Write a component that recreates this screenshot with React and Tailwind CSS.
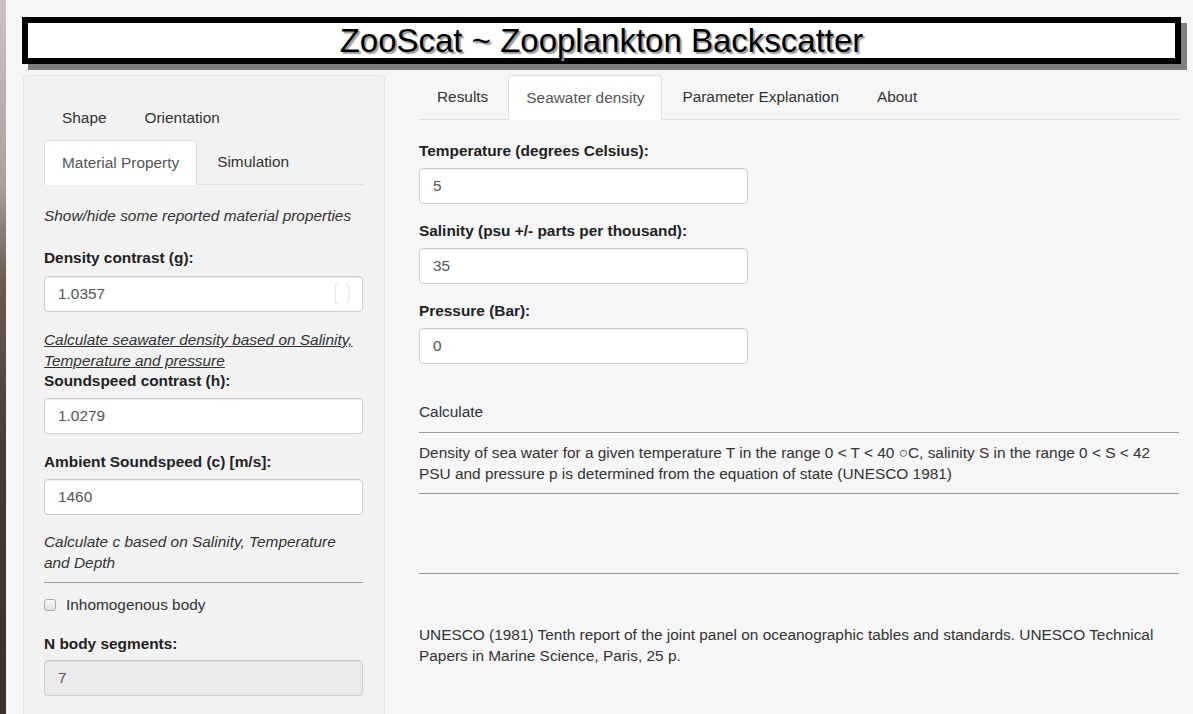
import React from "react";

function Tab({ label, active }) {
  if (active) {
    return (
      <div className="h-[45px] -mb-px mr-[2px] px-[17px] flex items-center bg-white border border-[#ddd] border-b-transparent rounded-t-[4px] text-[#555]">
        {label}
      </div>
    );
  }
  return (
    <div className="h-[44px] mr-[2px] px-[18px] flex items-center text-[#333]">
      {label}
    </div>
  );
}

function Field({ value, disabled, spinner, className = "" }) {
  return (
    <div className={`relative h-[36px] ${className}`}>
      <input
        readOnly
        value={value}
        className={`w-full h-full rounded-[4px] border border-[#ccc] px-[13px] text-[15.4px] text-[#555] outline-none shadow-[inset_0_1px_1px_rgba(0,0,0,0.075)] ${
          disabled ? "bg-[#ebebeb]" : "bg-white"
        }`}
      />
      {spinner && (
        <svg
          className="absolute right-[12px] top-[7px]"
          width="18"
          height="22"
          viewBox="0 0 18 22"
        >
          <path d="M5 1 Q2 1 2 5 L2 17 Q2 21 5 21" fill="none" stroke="#e2e2e2" strokeWidth="1" />
          <path d="M13 1 Q16 1 16 5 L16 17 Q16 21 13 21" fill="none" stroke="#e2e2e2" strokeWidth="1" />
        </svg>
      )}
    </div>
  );
}

function Label({ children, className = "" }) {
  return <div className={`font-bold text-[#222] leading-[20px] ${className}`}>{children}</div>;
}

export default function App() {
  return (
    <div className="flex min-h-screen bg-[#f6f6f6] text-[15.4px] leading-[20px] text-[#333] font-['Liberation_Sans',Arial,sans-serif]">
      {/* strip of desktop photo at the left edge */}
      <div className="w-[6px] shrink-0 bg-[linear-gradient(to_bottom,#c9c5c0_0%,#a8a29a_25%,#6a5c4f_38%,#4a3d32_60%,#3a3028_100%)]" />

      <div className="flex-1 pl-[16px] pr-[12px]">
        {/* Title */}
        <header className="mt-[17px] h-[47px] border-[6px] border-black bg-white shadow-[6px_6px_0_#808080] flex items-center justify-center">
          <h1 className="text-[33px] leading-none text-black [text-shadow:2px_2px_1px_#9c9c9c]">
            ZooScat ~ Zooplankton Backscatter
          </h1>
        </header>

        <div className="mt-[11px] flex items-start">
          {/* Sidebar */}
          <aside className="ml-[1px] w-[362px] min-h-[660px] bg-[#f2f2f2] border border-[#e3e3e3] rounded-[4px] pt-[20px] pl-[20px] pr-[21px] pb-[20px]">
            <div className="flex h-[44px]">
              <Tab label="Shape" />
              <Tab label="Orientation" />
            </div>
            <div className="flex items-end h-[45px] border-b border-[#ddd]">
              <Tab label="Material Property" active />
              <Tab label="Simulation" />
            </div>

            <p className="mt-[21px] italic">Show/hide some reported material properties</p>

            <Label className="mt-[22px]">Density contrast (g):</Label>
            <Field className="mt-[8px]" value="1.0357" spinner />

            <p className="mt-[17px] italic underline leading-[21px]">
              Calculate seawater density based on Salinity,
              <br />
              Temperature and pressure
            </p>
            <Label>Soundspeed contrast (h):</Label>
            <Field className="mt-[7px]" value="1.0279" />

            <Label className="mt-[18px]">Ambient Soundspeed (c) [m/s]:</Label>
            <Field className="mt-[7px]" value="1460" />

            <p className="mt-[16px] italic leading-[21px]">
              Calculate c based on Salinity, Temperature
              <br />
              and Depth
            </p>
            <hr className="mt-[9px] border-0 border-t border-[#999]" />

            <label className="mt-[12px] flex items-center h-[20px]">
              <span className="w-[12px] h-[12px] rounded-[3px] border border-[#a8a8a8] bg-[linear-gradient(#fafafa,#e0e0e0)]" />
              <span className="ml-[10px]">Inhomogenous body</span>
            </label>

            <Label className="mt-[19px]">N body segments:</Label>
            <Field className="mt-[6px]" value="7" disabled />
          </aside>

          {/* Main */}
          <main className="ml-[34px] w-[760px]">
            <div className="flex items-end h-[45px] border-b border-[#ddd]">
              <Tab label="Results" />
              <Tab label="Seawater density" active />
              <Tab label="Parameter Explanation" />
              <Tab label="About" />
            </div>

            <Label className="mt-[21px]">Temperature (degrees Celsius):</Label>
            <Field className="mt-[7px] w-[329px]" value="5" />

            <Label className="mt-[17px]">Salinity (psu +/- parts per thousand):</Label>
            <Field className="mt-[7px] w-[329px]" value="35" />

            <Label className="mt-[17px]">Pressure (Bar):</Label>
            <Field className="mt-[7px] w-[329px]" value="0" />

            <p className="mt-[38px]">Calculate</p>
            <hr className="mt-[10px] border-0 border-t border-[#999]" />
            <p className="mt-[9px] leading-[21px]">
              Density of sea water for a given temperature T in the range 0 &lt; T &lt; 40 ○C, salinity S in the range 0 &lt; S &lt; 42
              <br />
              PSU and pressure p is determined from the equation of state (UNESCO 1981)
            </p>
            <hr className="mt-[9px] border-0 border-t border-[#999]" />
            <hr className="mt-[79px] border-0 border-t border-[#999]" />
            <p className="mt-[50px] leading-[21px]">
              UNESCO (1981) Tenth report of the joint panel on oceanographic tables and standards. UNESCO Technical
              <br />
              Papers in Marine Science, Paris, 25 p.
            </p>
          </main>
        </div>
      </div>
    </div>
  );
}
